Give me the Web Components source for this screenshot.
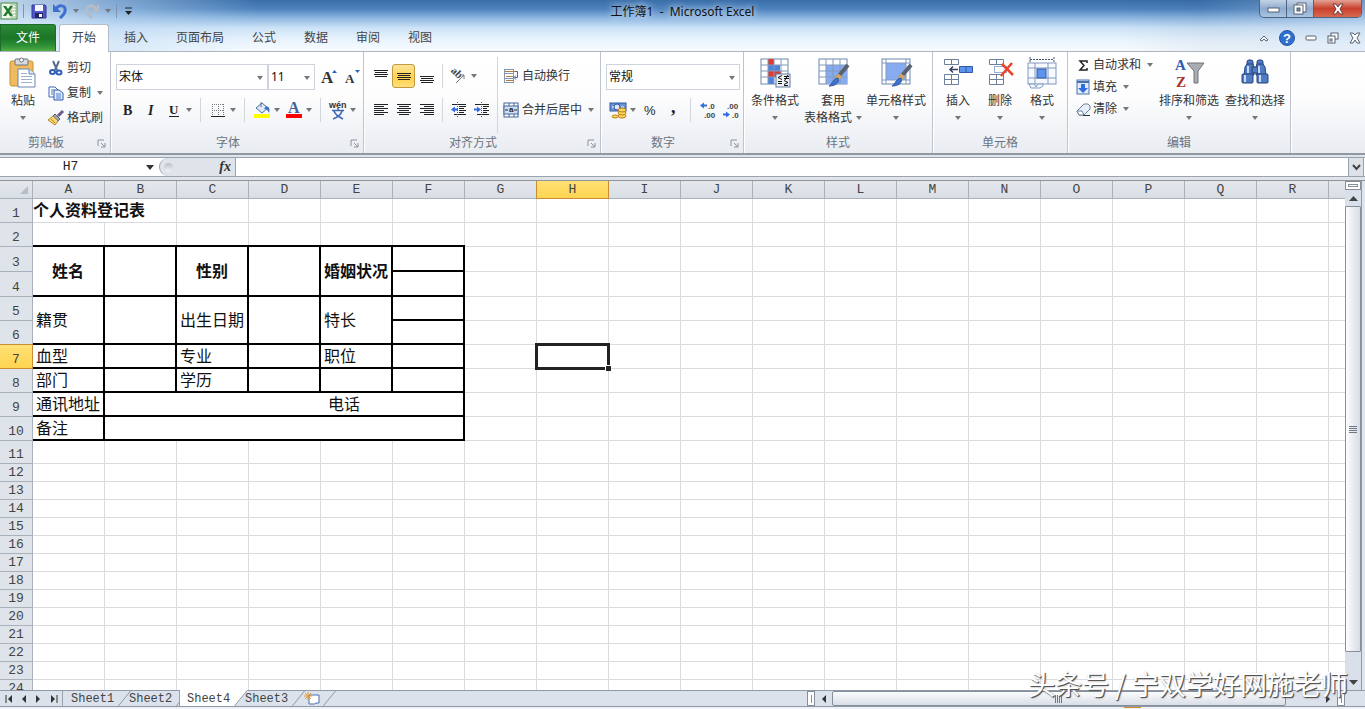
<!DOCTYPE html>
<html lang="zh-CN">
<head>
<meta charset="utf-8">
<title>工作簿1 - Microsoft Excel</title>
<style>
html,body{margin:0;height:100%;overflow:hidden}
body{font-family:"Noto Sans","Noto Sans CJK SC",sans-serif;font-size:12px;line-height:16px;color:#333;background:#dfe5ee}
</style>
</head>
<body>
<xl-app></xl-app>
<script>
const ICONS = {
excel:[18,18,`<rect x="1" y="1" width="16" height="16" fill="#eef7ea" stroke="#3c8a3a"/><rect x="11" y="3" width="5" height="12" fill="#fff" stroke="#8dbb84"/><path d="M11 6h5M11 9h5M11 12h5" stroke="#8dbb84"/><path d="M3 4h3l2 3 2-3h3L9.500 9l3.500 5h-3l-2-3-2 3H3l3.500-5z" fill="#1f7a2c"/>`],
save:[16,16,`<path d="M1 2h13l1 1v12H1z" fill="#5457c2" stroke="#3336a0"/><rect x="4" y="2" width="8" height="6" fill="#f3f6ff"/><rect x="4" y="10" width="8" height="5" fill="#23246e"/><rect x="8" y="11" width="3" height="3" fill="#fff"/>`],
undo:[16,16,`<path d="M4 6C7 1 14 2 13 8c0 3-3 5-5 7" fill="none" stroke="#3f6fd0" stroke-width="3"/><path d="M1 1v8h8z" fill="#3f6fd0"/>`],
redo:[16,16,`<path d="M12 6C9 1 2 2 3 8c0 3 3 5 5 7" fill="none" stroke="#b4bcc8" stroke-width="3"/><path d="M15 1v8H7z" fill="#b4bcc8"/>`],
custom:[9,8,`<path d="M1 1h7" stroke="#222"/><path d="M1 4h7L4.500 8z" fill="#222"/>`],
down:[6,4,`<path d="M0 0h6L3 4z" fill="#777"/>`],
dark:[8,5,`<path d="M0 0h8L4 5z" fill="#333"/>`],
paste:[32,32,`<rect x="3" y="4" width="23" height="25" rx="2" fill="#f0bb5e" stroke="#c98f35"/><rect x="8" y="2" width="13" height="6" rx="1" fill="#d5d9e0" stroke="#6d747e"/><circle cx="14.500" cy="3" r="2" fill="#fff" stroke="#6d747e"/><path d="M11 12h11l6 5v13H11z" fill="#fff" stroke="#6a86ad"/><path d="M22 12v5h6" fill="#dbe6f4" stroke="#6a86ad"/><path d="M14 16.500h6M14 19.500h11M14 22.500h11M14 25.500h11" stroke="#9db1cc"/>`],
cut:[16,16,`<path d="M5 1l4 9M11 1L7 10" stroke="#5b6e8b" stroke-width="2"/><ellipse cx="4.500" cy="12" rx="2.500" ry="2" fill="none" stroke="#2f5fb5" stroke-width="2"/><ellipse cx="11" cy="12.500" rx="2.500" ry="2" fill="none" stroke="#2f5fb5" stroke-width="2"/>`],
copy:[16,16,`<path d="M1 2h6l3 3v7H1z" fill="#fff" stroke="#3f68b4"/><path d="M6 5h5l4 3v7H6z" fill="#e5eefc" stroke="#2c56a8"/><path d="M3 5h3M3 7h2M3 9h2M8 9h5M8 11h5M8 13h5" stroke="#4e7fd0"/>`],
brush:[16,16,`<path d="M15 1l-5 5" stroke="#6d5a86" stroke-width="3"/><path d="M7 4l5 5-2 2-5-5z" fill="#9aa4b4" stroke="#59626f"/><path d="M5 6l5 5-3 4-7-5z" fill="#f5d672" stroke="#b6862c"/><path d="M3 9l4 4" stroke="#b6862c"/>`],
grow:[18,16,`<text x="1" y="14" font-family="Liberation Serif" font-weight="700" font-size="17" fill="#333">A</text><path d="M12 4h5L14.500 1z" fill="#2f63bd"/>`],
shrink:[18,16,`<text x="2" y="14" font-family="Liberation Serif" font-weight="700" font-size="13" fill="#333">A</text><path d="M12 1h5l-2.500 3z" fill="#2f63bd"/>`],
bold:[16,16,`<text x="3" y="13" font-family="Liberation Serif" font-weight="700" font-size="14" fill="#222">B</text>`],
italic:[16,16,`<text x="5" y="13" font-family="Liberation Serif" font-weight="700" font-style="italic" font-size="14" fill="#222">I</text>`],
under:[16,16,`<text x="3" y="12" font-family="Liberation Serif" font-weight="700" font-size="13" fill="#222">U</text><path d="M3 14.500h10" stroke="#222"/>`],
border:[16,16,`<path d="M2.500 2v11M8.500 2v11M13.500 2v11M2 2.500h12M2 8.500h12" stroke="#777" stroke-dasharray="1 1"/><path d="M1 14.500h14" stroke="#222"/>`],
fill:[18,18,`<rect x="1" y="13" width="16" height="4" fill="#ff0"/><path d="M3 7l6-5 6 5-6 5z" fill="#dbe8f8" stroke="#52719f"/><path d="M8 6V1" stroke="#52719f"/><path d="M13 5c4 1 4 4 3 7-1-2-2-4-5-4z" fill="#4374c4"/>`],
color:[18,18,`<text x="3" y="12" font-family="Liberation Serif" font-weight="700" font-size="16" fill="#3d5f9e">A</text><rect x="1" y="13" width="16" height="4" fill="#f00"/>`],
wen:[20,18,`<text x="1" y="7" font-family="Liberation Sans" font-weight="700" font-size="9" fill="#333">wén</text><path d="M4 9.500h12M10 7v2M14 10c-1 4-4 6-9 8M6 10c1 4 5 6 9 8" fill="none" stroke="#3e68b7" stroke-width="1.500"/>`],
top:[16,16,`<path d="M1 2.500h14M2 4.500h12M1 6.500h14M2 8.500h12" stroke="#222"/>`],
middle:[16,16,`<path d="M1 5.500h14M2 7.500h12M1 9.500h14M2 11.500h12" stroke="#222"/>`],
bottom:[16,16,`<path d="M1 8.500h14M2 10.500h12M1 12.500h14M2 14.500h12" stroke="#222"/>`],
left:[16,16,`<path d="M1 2.500h14M1 4.500h10M1 6.500h14M1 8.500h10M1 10.500h14M1 12.500h10" stroke="#222"/>`],
center:[16,16,`<path d="M1 2.500h14M3 4.500h10M1 6.500h14M3 8.500h10M1 10.500h14M3 12.500h10" stroke="#222"/>`],
right:[16,16,`<path d="M1 2.500h14M5 4.500h10M1 6.500h14M5 8.500h10M1 10.500h14M5 12.500h10" stroke="#222"/>`],
orient:[18,16,`<g transform="rotate(45 6 6)"><text x="0" y="8" font-family="Liberation Serif" font-weight="700" font-size="11" fill="#444">ab</text></g><path d="M6 15l8-8M14 11V7h-4" fill="none" stroke="#777"/>`],
outdent:[16,16,`<path d="M1 2.500h14M8 4.500h7M8 6.500h5M8 8.500h7M8 10.500h5M3 12.500h12" stroke="#222"/><path d="M6.500 0v16" stroke="#555" stroke-dasharray="1 1"/><path d="M0 7.500l4-3v2h3v2H4v2z" fill="#2f6de0"/>`],
indent:[16,16,`<path d="M1 2.500h14M9 4.500h6M9 6.500h4M9 8.500h6M9 10.500h4M3 12.500h12" stroke="#222"/><path d="M7.500 0v16" stroke="#555" stroke-dasharray="1 1"/><path d="M7 7.500l-4-3v2H0v2h3v2z" fill="#2f6de0"/>`],
wrap:[16,16,`<rect x="1.500" y="1.500" width="9" height="13" fill="#fff" stroke="#8296b4"/><path d="M1 5.500h10M1 10.500h10" stroke="#8296b4"/><path d="M2 3.500h10M3 8.500h7M3 12.500h7" stroke="#b57a3a"/><path d="M12 3.500h2.500V9.500h-3M13 7.500l-2 2 2 2" fill="none" stroke="#3e68b7"/>`],
merge:[16,16,`<rect x="1" y="1" width="14" height="14" fill="#fff" stroke="#46679b"/><path d="M1 4.500h14M1 11.500h14M6 1v3M11 1v3M6 12v3M11 12v3" stroke="#46679b"/><rect x="1" y="4" width="14" height="8" fill="#cfe0f6" stroke="#46679b"/><text x="6" y="10" font-family="Liberation Sans" font-weight="700" font-size="8" fill="#222">a</text><path d="M2 8h3M11 8h3" stroke="#222"/>`],
money:[18,18,`<rect x="1" y="2" width="16" height="8" fill="#6c93d8" stroke="#2f58a3"/><circle cx="8" cy="6" r="3" fill="#dbe8fb" stroke="#2f58a3"/><path d="M3 6h2M12 6h3" stroke="#fff"/><g fill="#ffd75c" stroke="#b87c15"><ellipse cx="13" cy="15" rx="4" ry="2"/><ellipse cx="13" cy="12" rx="4" ry="2"/><ellipse cx="13" cy="9" rx="4" ry="2"/><ellipse cx="6" cy="15.500" rx="3" ry="1.500"/></g>`],
percent:[16,16,`<text x="2" y="13" font-family="Liberation Sans" font-size="13" fill="#222">%</text>`],
comma:[16,16,`<text x="6" y="11" font-family="Liberation Serif" font-weight="700" font-size="18" fill="#222">,</text>`],
incdec:[18,20,`<text x="9" y="9" font-family="Liberation Sans" font-weight="700" font-size="8" fill="#444">.0</text><text x="5" y="18" font-family="Liberation Sans" font-weight="700" font-size="8" fill="#444">.00</text><path d="M1 5.500l4-3v2h3v2H5v2z" fill="#2f6de0"/>`],
decdec:[18,20,`<text x="5" y="9" font-family="Liberation Sans" font-weight="700" font-size="8" fill="#444">.00</text><text x="10" y="18" font-family="Liberation Sans" font-weight="700" font-size="8" fill="#444">.0</text><path d="M8 14.500l-4-3v2H1v2h3v2z" fill="#2f6de0"/>`],
cond:[32,32,`<rect x="2" y="2" width="27" height="25" fill="#fff" stroke="#6d87ad"/><rect x="9" y="2" width="6" height="6" fill="#e03b30"/><rect x="9" y="8" width="12" height="6" fill="#4f83dc"/><rect x="9" y="14" width="13" height="6" fill="#e03b30"/><rect x="9" y="20" width="6" height="7" fill="#4f83dc"/><path d="M2 8h27M2 14h27M2 20h27M9 2v25M15 2v25M22 2v25" stroke="#8299bd"/><rect x="17" y="17" width="14" height="13" fill="#eef2f8" stroke="#61799f"/><path d="M23 18.500l-4 2 4 2M19 24.500h4M19 26.500h4M25 19.500h5M25 21.500h5M29 18l-3 5M25 23.500l4 2-4 2M25 28.500h4" fill="none" stroke="#111"/>`],
tablefmt:[32,32,`<rect x="2" y="2" width="28" height="25" fill="#fff" stroke="#6d87ad"/><rect x="9" y="8" width="21" height="19" fill="#86abef"/><path d="M2 8h28M2 14h28M2 20h28M9 2v25M16 2v25M23 2v25" stroke="#8299bd"/><path d="M31 8L20 21" stroke="#59616e" stroke-width="4"/><path d="M23 18l-3 4" stroke="#d3a45b" stroke-width="5"/><path d="M21 21c2 5-3 8-9 8 4-2 3-7 9-8z" fill="#3f73cf" stroke="#2d57a5"/>`],
cellstyle:[32,32,`<rect x="2" y="2" width="28" height="25" fill="#fff" stroke="#6d87ad"/><rect x="6" y="6" width="20" height="17" fill="#86abef"/><path d="M2 6h28M2 23h28M6 2v25M26 2v25" stroke="#8299bd"/><path d="M31 8L20 21" stroke="#59616e" stroke-width="4"/><path d="M23 18l-3 4" stroke="#d3a45b" stroke-width="5"/><path d="M21 21c2 5-3 8-9 8 4-2 3-7 9-8z" fill="#3f73cf" stroke="#2d57a5"/>`],
insert:[32,32,`<g fill="#fff" stroke="#6c7f9c"><path d="M2.500 2.500h14v5h-14zM9.500 2.500v5M2.500 17.500h14v10h-14zM9.500 17.500v10M2.500 22.500h14"/></g><path d="M17.500 9.500h13v6h-13zM24 9.500v6" fill="#5b93ee" stroke="#2f5aa8"/><path d="M8 12.500h8M11 9.500l-3 3 3 3" fill="none" stroke="#33435e" stroke-width="1.500"/>`],
remove:[32,32,`<g fill="#fff" stroke="#6c7f9c"><path d="M5.500 2.500h14v5h-14zM12.500 2.500v5M5.500 17.500h14v10h-14zM12.500 17.500v10M5.500 22.500h14"/></g><path d="M10.500 9.500h12v6h-12z" fill="none" stroke="#2f5aa8" stroke-dasharray="1 1"/><path d="M18 7l11 11M28 6L17 19" stroke="#ea4528" stroke-width="2.500"/>`],
format:[32,32,`<path d="M4 2.500h24M4 0v5M28 0v5" stroke="#44536c" stroke-dasharray="2 1"/><rect x="2" y="6" width="28" height="21" fill="#f6f9fe" stroke="#8299bd"/><path d="M2 11h28M2 21h28M9 6v21M22 6v21" stroke="#8299bd"/><rect x="11" y="12" width="9" height="9" fill="#5b93ee" stroke="#2f5aa8"/><path d="M3 27h5l2 3 2-3h5v2l-3 2H5z" fill="#f6f9fe" stroke="#8299bd"/>`],
sum:[14,16,`<path d="M11 6V4H4l4 4.500L4 13h7v-2" fill="none" stroke="#222" stroke-width="1.500"/>`],
filldown:[14,16,`<rect x="1" y="1" width="12" height="14" fill="#e1ecfb" stroke="#4a70ae"/><path d="M1 3h12" stroke="#4a70ae" stroke-width="2"/><path d="M5 5h4v4h3l-5 5-5-5h3z" fill="#2f6de0"/>`],
erase:[14,16,`<path d="M1 10l7-7h4l2 2v3l-6 6H3z" fill="#e9eff8" stroke="#6c7f9c"/><path d="M1 10l2 4h5L6 10z" fill="#fff" stroke="#6c7f9c"/><path d="M7 14.500h7" stroke="#333"/>`],
sort:[32,32,`<path d="M14 6h17l-6 8v12h-4V14z" fill="#a9adb2" stroke="#6f747a"/><text x="2" y="13" font-family="Liberation Serif" font-weight="700" font-size="15" fill="#2c5bb5">A</text><text x="3" y="30" font-family="Liberation Serif" font-weight="700" font-size="15" fill="#a8302a">Z</text>`],
find:[32,32,`<g fill="#4f7cc5" stroke="#26427c"><rect x="8" y="3" width="6" height="6" rx="2"/><rect x="18" y="3" width="6" height="6" rx="2"/><path d="M6 10l2-3h6l1 3v8H5zM17 10l1-3h6l2 3 1 8H17z"/><rect x="13" y="10" width="6" height="6"/><rect x="3" y="17" width="11" height="9" rx="1"/><rect x="18" y="17" width="11" height="9" rx="1"/></g><path d="M6 18v7M21 18v7M9 9v7M20 9v7" stroke="#c8daf6" stroke-width="2"/>`],
launch:[9,9,`<path d="M1 7V1h6M4 4l4 4M8 4v4H4" fill="none" stroke="#8b929c"/>`],
wmin:[14,8,`<rect x="2" y="3" width="11" height="4" fill="#fff" stroke="#566173"/>`],
wmax:[14,14,`<path d="M4 1h9v9h-9z" fill="#fff" stroke="#566173"/><rect x="1" y="3" width="9" height="9" fill="#fff" stroke="#566173"/><rect x="4" y="6" width="3" height="3" fill="#6b86ab" stroke="#566173"/>`],
wclose:[14,12,`<path d="M2 1h3l2 3 2-3h3L9 6l3 5H9L7 8l-2 3H2l3-5z" fill="#fff" stroke="#6b3a3a"/>`],
chev:[10,8,`<path d="M1 6l4-4 4 4-2 1-2-2-2 2z" fill="#fff" stroke="#59636f"/>`],
help:[16,16,`<circle cx="8" cy="8" r="7.500" fill="#2f6fd0" stroke="#2357a8"/><text x="4" y="13" font-family="Liberation Sans" font-weight="700" font-size="13" fill="#fff">?</text>`],
mmin:[12,6,`<rect x="1" y="1" width="10" height="4" rx="1" fill="#fff" stroke="#59636f"/>`],
mmax:[12,12,`<rect x="4" y="1" width="7" height="6" fill="#fff" stroke="#59636f"/><rect x="1" y="4" width="7" height="7" fill="#fff" stroke="#59636f"/><rect x="3" y="7" width="2" height="2" fill="#fff" stroke="#59636f"/>`],
mclose:[12,12,`<path d="M1 1h3l2 2 2-2h3L8 6l3 5H8L6 8l-2 3H1l3-5z" fill="#fff" stroke="#59636f"/>`],
first:[8,8,`<path d="M1 0v8" stroke="#333"/><path d="M7 0v8L3 4z" fill="#333"/>`],
prev:[5,8,`<path d="M5 0v8L1 4z" fill="#333"/>`],
next:[5,8,`<path d="M0 0v8l4-4z" fill="#333"/>`],
last:[8,8,`<path d="M7 0v8" stroke="#333"/><path d="M1 0v8l4-4z" fill="#333"/>`],
up:[9,5,`<path d="M0 5h9L4.500 0z" fill="#444"/>`],
newsheet:[16,14,`<path d="M5 3h10v8h-3l-1 1H5z" fill="#fff" stroke="#4a70ae"/><path d="M4 0v8M0 4h8M1 1l6 6M7 1L1 7" stroke="#e59a2c"/>`],
slash:[14,16,`<path d="M0 0h14L1 16H0z" class="face"/><path d="M13.500 0L.5 16" stroke="#8f99a8"/>`]
};
const icon = n => { const [w,h,b] = ICONS[n]; return `<svg width="${w}" height="${h}" viewBox="0 0 ${w} ${h}" fill="none" aria-hidden="true">${b}</svg>`; };
const BASE = `*{box-sizing:border-box}svg{display:block;flex:none;overflow:visible}button,input,select{font:inherit;color:inherit;border:0;background:none;padding:0;margin:0;border-radius:0;appearance:none;outline:0}`;
const define = (tag, render) => customElements.define(tag, class extends HTMLElement{
  connectedCallback(){
    if(this.shadowRoot) return;
    const t = document.createElement('template');
    t.innerHTML = render(this);
    this.attachShadow({mode:'open'}).append(t.content.cloneNode(true));
  }
});

define('xl-tool', e => `<style>${BASE}
:host{display:block;flex:none}
button{display:flex;align-items:center;height:24px;width:23px;border:1px solid transparent;border-radius:3px}
.i{display:flex;justify-content:center;flex:1}
:host([arrow]) button{width:32px;padding-right:2px}
:host([arrow]) .i{flex:0 0 20px;margin:0 2px 0 1px}
:host([on]) button{background:linear-gradient(#fbe49a,#ffd04c 60%,#ffe17c);border-color:#c29a3d}
</style><button aria-label="${e.getAttribute('label')}"><span class="i">${icon(e.getAttribute('icon'))}</span>${e.hasAttribute('arrow')?icon('down'):''}</button>`);

define('xl-small', e => `<style>${BASE}
:host{display:block;flex:none}
button{display:flex;align-items:center;height:22px;gap:3px;white-space:nowrap}
.a{margin-left:3px}
</style><button>${icon(e.getAttribute('icon'))}<span><slot></slot></span>${e.hasAttribute('arrow')?`<span class="a">${icon('down')}</span>`:''}</button>`);

define('xl-big', e => `<style>${BASE}
:host{display:block;flex:none;width:42px}
button{display:flex;flex-direction:column;align-items:center;width:100%;white-space:nowrap}
.t{margin-top:4px}
.a{padding-top:7px}
.l{display:flex;align-items:center;gap:4px;margin-top:1px}
</style><button>${icon(e.getAttribute('icon'))}<span class="t"><slot></slot></span>${e.hasAttribute('second')?`<span class="l">${e.getAttribute('second')}${icon('down')}</span>`:`<span class="a">${icon('down')}</span>`}</button>`);

define('xl-sep', () => `<style>:host{flex:none;width:12px;display:flex;justify-content:center;align-self:stretch}i{width:1px;background:#d3d7dd}</style><i></i>`);

define('xl-combo', e => `<style>${BASE}
:host{display:block;position:relative;height:26px;border:1px solid #cfd4dc;background:#fff}
select{width:100%;height:24px;padding-left:2px;color:#111}
svg{position:absolute;right:4px;top:11px;pointer-events:none}
</style><select aria-label="${e.getAttribute('label')}"><option>${e.getAttribute('value')}</option></select>${icon('down')}`);

define('xl-group', e => `<style>${BASE}
:host{display:flex;flex-direction:column;flex:none;border-right:1px solid #bfc4cc;box-shadow:1px 0 #fff}
.b{flex:1;display:flex;padding:5px 0 0 var(--inset,5px)}
.f{display:flex;align-items:center;height:20px;color:#6b7480}
.f span{flex:1;text-align:center}
.f button{margin:0 4px 0 5px;flex:none}
</style><div class="b"><slot></slot></div><div class="f"><span>${e.getAttribute('label')}</span>${e.hasAttribute('launcher')?`<button aria-label="${e.getAttribute('label')}设置">${icon('launch')}</button>`:''}</div>`);

define('xl-titlebar', () => `<style>${BASE}
:host{display:grid;grid-template-columns:1fr auto 1fr;height:24px}
.q{display:flex;align-items:center;height:22px;gap:5px}
.q button{display:flex;align-items:center}
.q i{width:1px;height:14px;background:#7f95b3;margin:0 2px 0 0}
h1{font:12px/24px "Noto Sans","Noto Sans CJK SC",sans-serif;margin:0;color:#111;white-space:pre;text-shadow:0 0 6px #cfe3f8,0 0 8px #cfe3f8}
.w{justify-self:end;display:flex;height:18px;margin-right:3px;border:1px solid #4f6480;border-top:0;border-radius:0 0 5px 5px;overflow:hidden;background:linear-gradient(#c3d3e7,#8fabce 50%,#a9c5e3)}
.w button{display:flex;align-items:center;justify-content:center;width:27px;border-right:1px solid #4f6480}
.w .x{width:47px;border:0;background:linear-gradient(#e3a294,#c9402c 50%,#d9694f)}
</style>
<div class="q">${icon('excel')}<i></i><button aria-label="保存">${icon('save')}</button><button aria-label="撤消">${icon('undo')}</button>${icon('down')}<button aria-label="恢复">${icon('redo')}</button>${icon('down')}<i></i><button aria-label="自定义">${icon('custom')}</button></div>
<h1>工作簿1  -  Microsoft Excel</h1>
<div class="w"><button aria-label="最小化">${icon('wmin')}</button><button aria-label="还原">${icon('wmax')}</button><button class="x" aria-label="关闭">${icon('wclose')}</button></div>`);

define('xl-tabs', () => `<style>${BASE}
:host{display:flex;height:28px;align-items:flex-end;border-bottom:1px solid #adb5bf}
nav{display:flex;flex:1}
nav button{height:27px;padding:0 14px;color:#444}
nav .f{width:56px;margin-right:3px;color:#fff;border-radius:0 3px 0 0;background:linear-gradient(#2c8a36,#1b7427 50%,#2f9136 80%,#52ad45);border:1px solid #1d6b28;border-bottom:0}
nav .on{width:50px;height:28px;margin:0 1px -1px 0;padding:0 10px 1px;background:#fff;border:1px solid #b3bcc8;border-bottom:0;border-radius:3px 3px 0 0}
.r{display:flex;align-items:center;gap:10px;height:27px;padding-right:4px}
.r button{display:flex}
</style>
<nav><button class="f">文件</button><button class="on">开始</button>${['插入','页面布局','公式','数据','审阅','视图'].map(t=>`<button>${t}</button>`).join('')}</nav>
<div class="r">${[['chev','收起功能区'],['help','帮助'],['mmin','最小化窗口'],['mmax','还原窗口'],['mclose','关闭窗口']].map(([i,l])=>`<button aria-label="${l}">${icon(i)}</button>`).join('')}</div>`);

define('xl-ribbon', () => `<style>${BASE}
:host{display:flex;height:103px;background:linear-gradient(#fff,#fdfdfe 45%,#f3f5f8 70%,#e9ecf1);border-bottom:2px solid #9298a1;overflow:hidden}
.row{display:flex;align-items:center;height:24px}
.rows{display:flex;flex-direction:column;gap:10px;padding-top:7px}
.top{height:26px;margin-bottom:-2px}
.col{display:flex;flex-direction:column}
.clip{width:111px;--inset:2px}.font{width:253px}.align{width:237px}.num{width:143px}.style{width:189px;--inset:3px}.cell{width:135px;--inset:4px}.edit{width:223px;--inset:8px}
</style>
<xl-group class="clip" label="剪贴板" launcher><xl-big icon="paste">粘贴</xl-big>
 <div class="col" style="gap:3px;padding-left:4px"><xl-small icon="cut">剪切</xl-small><xl-small icon="copy" arrow>复制</xl-small><xl-small icon="brush">格式刷</xl-small></div></xl-group>
<xl-group class="font" label="字体" launcher><div class="rows">
 <div class="row top"><xl-combo label="字体" value="宋体" style="width:152px"></xl-combo><xl-combo label="字号" value="11" style="width:47px;margin-right:2px"></xl-combo><xl-tool icon="grow" label="增大字号"></xl-tool><xl-tool icon="shrink" label="减小字号"></xl-tool></div>
 <div class="row"><xl-tool icon="bold" label="加粗"></xl-tool><xl-tool icon="italic" label="倾斜"></xl-tool><xl-tool icon="under" label="下划线" arrow></xl-tool><xl-sep></xl-sep><xl-tool icon="border" label="边框" arrow></xl-tool><xl-sep></xl-sep><xl-tool icon="fill" label="填充颜色" arrow></xl-tool><xl-tool icon="color" label="字体颜色" arrow></xl-tool><xl-sep></xl-sep><xl-tool icon="wen" label="拼音指南" arrow></xl-tool></div></div></xl-group>
<xl-group class="align" label="对齐方式" launcher><div class="rows" style="width:122px">
 <div class="row"><xl-tool icon="top" label="顶端对齐"></xl-tool><xl-tool icon="middle" label="垂直居中" on></xl-tool><xl-tool icon="bottom" label="底端对齐"></xl-tool><xl-sep style="width:9px"></xl-sep><xl-tool icon="orient" label="方向" arrow></xl-tool></div>
 <div class="row"><xl-tool icon="left" label="左对齐"></xl-tool><xl-tool icon="center" label="居中"></xl-tool><xl-tool icon="right" label="右对齐"></xl-tool><xl-sep style="width:9px"></xl-sep><xl-tool icon="outdent" label="减少缩进"></xl-tool><xl-tool icon="indent" label="增加缩进"></xl-tool></div></div>
 <xl-sep></xl-sep>
 <div class="rows"><div class="row"><xl-small icon="wrap">自动换行</xl-small></div><div class="row"><xl-small icon="merge" arrow>合并后居中</xl-small></div></div></xl-group>
<xl-group class="num" label="数字" launcher><div class="rows">
 <div class="row top"><xl-combo label="数字格式" value="常规" style="width:134px"></xl-combo></div>
 <div class="row"><xl-tool icon="money" label="会计数字格式" arrow></xl-tool><xl-tool icon="percent" label="百分比样式"></xl-tool><xl-tool icon="comma" label="千位分隔样式"></xl-tool><xl-sep></xl-sep><xl-tool icon="incdec" label="增加小数位数"></xl-tool><xl-tool icon="decdec" label="减少小数位数"></xl-tool></div></div></xl-group>
<xl-group class="style" label="样式"><xl-big icon="cond" style="width:56px">条件格式</xl-big><xl-big icon="tablefmt" second="表格格式" style="width:60px">套用</xl-big><xl-big icon="cellstyle" style="width:66px">单元格样式</xl-big></xl-group>
<xl-group class="cell" label="单元格"><xl-big icon="insert">插入</xl-big><xl-big icon="remove">删除</xl-big><xl-big icon="format">格式</xl-big></xl-group>
<xl-group class="edit" label="编辑"><div class="col" style="width:80px;margin-top:-3px"><xl-small icon="sum" arrow>自动求和</xl-small><xl-small icon="filldown" arrow>填充</xl-small><xl-small icon="erase" arrow>清除</xl-small></div><xl-big icon="sort" style="width:66px">排序和筛选</xl-big><xl-big icon="find" style="width:66px">查找和选择</xl-big></xl-group>`);

define('xl-formula', () => `<style>${BASE}
:host{display:block;padding:2px 0 3px;background:#dfe4ea;border-bottom:1px solid #8f949c}
.r{display:flex;height:20px;background:#fff;border:1px solid #9aa2ad;border-width:1px 0}
.n{display:flex;align-items:center;width:159px}
.n input{flex:1;min-width:0;text-align:center;font:13px/16px "Liberation Mono",monospace;color:#222}
.n button{padding:0 5px}
.p{display:flex;align-items:center;width:77px;padding:0 4px;background:#dfe4ea;border:1px solid #9aa2ad;border-width:0 1px 0 1px;border-radius:9px 0 0 9px}
.p i{width:9px;height:9px;border-radius:50%;background:linear-gradient(#b9bfc8,#f3f5f7)}
.p button{margin-left:auto;font:italic 700 14px/16px "Liberation Serif",serif;color:#333}
.e{flex:1;min-width:0;padding:0 4px}
.x{width:16px;margin-right:1px;display:flex;align-items:center;justify-content:center;background:#dde2e9;border:1px solid #9aa2ad;border-width:0 1px}
</style><div class="r"><div class="n"><input aria-label="名称框" value="H7"><button aria-label="名称列表">${icon('dark')}</button></div><div class="p"><i></i><button>fx</button></div><input class="e" aria-label="编辑栏"><button class="x" aria-label="展开编辑栏"><svg width="9" height="7" fill="none"><path d="M1 1l3.500 4L8 1" stroke="#444" stroke-width="2"/></svg></button></div>`);

const HEIGHTS = [24,24,25,25,24,24,24,24,24,24,23];
/* text, column span, row span, classes: k = black bottom edge, r = black right edge */
const B = 'k r';
const FORM = {
 1:[['个人资料登记表',2,1,'title'],['',1],['',1],['',1],['',1]],
 2:Array.from({length:6},()=>['',1,1,'k']),
 3:[['姓名',1,2,B+' h'],['',1,2,B],['性别',1,2,B+' h'],['',1,2,B],['婚姻状况',1,2,B+' h'],['',1,1,B]],
 4:[['',1,1,B]],
 5:[['籍贯',1,2,B],['',1,2,B],['出生日期',1,2,B],['',1,2,B],['特长',1,2,B],['',1,1,B]],
 6:[['',1,1,B]],
 7:[['血型',1,1,B],['',1,1,B],['专业',1,1,B],['',1,1,B],['职位',1,1,B],['',1,1,B]],
 8:[['部门',1,1,B],['',1,1,B],['学历',1,1,B],['',1,1,B],['',1,1,B],['',1,1,B]],
 9:[['通讯地址',1,1,B],['',3,1,'k n'],['电话',2,1,B+' tel']],
 10:[['备注',1,1,B],['',5,1,B]]
};
define('xl-grid', () => {
  const cols = 'ABCDEFGHIJKLMNOPQRS'.split('');
  let rows = '';
  for(let r=1;r<=24;r++){
    const form = FORM[r] || Array.from({length:6},()=>['',1]);
    rows += `<tr style="height:${HEIGHTS[r-1]||18}px"><th scope="row"${r===7?' class="sel"':''}>${r}</th>`
      + form.map(([t,c,s=1,k=''])=>`<td colspan="${c}" rowspan="${s}" class="${k}">${t}</td>`).join('')
      + cols.slice(6).map(c=>`<td>${r===7&&c==='H'?'<div class="cursor"><i></i></div>':''}</td>`).join('') + '</tr>';
  }
  return `<style>${BASE}
:host{display:block;flex:1;min-width:0;overflow:hidden;background:#fff}
table{table-layout:fixed;width:1401px;border-collapse:separate;border-spacing:0}
th,td{padding:0;border:0}
th{font:13px/16px "Liberation Mono",monospace;color:#444;background:#dfe4ea;border:0 solid #aab1bb;border-width:0 1px 1px 0}
thead tr{height:18px}
thead th{background:linear-gradient(#e4e8ed,#d9dee5)}
tbody th{vertical-align:bottom}
th.sel{background:linear-gradient(#ffe175,#ffd451);border-color:#c98e35}
thead th.sel{box-shadow:-1px 0 #c98e35}
tbody th.sel{box-shadow:0 -1px #c98e35}
td{--r:inset -1px 0 #d9dbde;--b:inset 0 -1px #d9dbde;box-shadow:var(--b),var(--r);font-size:16px;line-height:20px;color:#111;padding:0 0 2px 3px;white-space:nowrap;vertical-align:middle}
td.k{--b:inset 0 -2px #000}
td.r{--r:inset -2px 0 #000}
td.n{--r:inset 0 0 #000}
td.h{font-weight:700;text-align:center;padding:0 2px 2px 0}
td.title{font-weight:700;padding-left:0}
td.tel{padding-left:7px}
td:has(.cursor){position:relative}
.cursor{position:absolute;inset:-2px -1px -1px -2px;border:3px solid #222}
.cursor i{position:absolute;right:-4px;bottom:-4px;width:6px;height:6px;background:#222;border:1px solid #fff;border-width:1px 0 0 1px}
.corner svg{margin:0 3px 0 auto}
</style><table><colgroup><col style="width:33px">${cols.map(()=>'<col style="width:72px">').join('')}</colgroup>
<thead><tr><th class="corner"><svg width="10" height="10"><path d="M9 1v8H1z" fill="#b8bec7"/></svg></th>${cols.map(c=>`<th scope="col"${c==='H'?' class="sel"':''}>${c==='S'?'':c}</th>`).join('')}</tr></thead><tbody>${rows}</tbody></table>`;
});

define('xl-vscroll', () => `<style>${BASE}
:host{display:flex;flex-direction:column;flex:none;width:17px;background:#dae0e9;border-right:1px solid #8f99a8}
button{display:flex;align-items:center;justify-content:center;flex:none;height:16px}
.s{height:9px;border:1px solid #858e9b;background:#fff}
.s i{width:10px;height:3px;border:1px solid #858e9b}
.t{flex:1;display:flex;flex-direction:column}
.h{flex:446;display:flex;flex-direction:column;align-items:center;justify-content:center;gap:1px;background:linear-gradient(90deg,#fdfdfe,#d7dce5);border:1px solid #858e9b;border-radius:1px}
.h i{width:8px;height:1px;background:#6f7783}
.g{flex:22}
</style><button class="s" aria-label="拆分"><i></i></button><button aria-label="向上">${icon('up')}</button><div class="t"><div class="h"><i></i><i></i><i></i><i></i></div><div class="g"></div></div><button aria-label="向下"><svg width="9" height="5"><path d="M0 0h9L4.500 5z" fill="#444"/></svg></button>`);

define('xl-sheets', () => `<style>${BASE}
:host{display:flex;height:17px;background:#dbe2ec;border:1px solid #8f99a8;border-width:1px 0;flex:none}
button{display:flex;align-items:center;justify-content:center}
.v{display:flex;width:63px;padding-left:1px;border-right:1px solid #9aa2ad}
.v button{width:15px}
.tabs{display:flex;flex:1}
.tabs button{position:relative;width:58px;height:15px;padding-left:8px;justify-content:flex-start;font:12px/16px "Liberation Mono",monospace;color:#444}
.tabs svg{position:absolute;left:54px;top:0}
.face{fill:none}
.tabs .on{z-index:1;height:16px;margin-top:-1px;padding:1px 0 0 7px;background:linear-gradient(90deg,#fff 54px,transparent 54px);border-left:1px solid #9aa2ad}
.on .face{fill:#fff}
.tabs .new{width:44px;padding-left:9px}
.tabs .new svg:first-child{position:static}
.tabs .new svg+svg{left:27px}
.hs{display:flex;width:538px;margin-right:20px}
.hs button{width:17px;flex:none}
.hs .sp{width:8px;border:1px solid #858e9b;background:#fff}
.sp i{width:1px;height:8px;background:#858e9b}
.t{flex:1;display:flex}
.h{flex:461;display:flex;align-items:center;justify-content:center;gap:1px;background:linear-gradient(#fbfcfd,#d9dee7);border:1px solid #858e9b;border-radius:2px}
.h i{width:1px;height:8px;background:#6f7783}
.g{flex:35}
</style>
<div class="v">${[['first','第一张'],['prev','上一张'],['next','下一张'],['last','最后一张']].map(([i,l])=>`<button aria-label="${l}">${icon(i)}</button>`).join('')}</div>
<div class="tabs">${['Sheet1','Sheet2','Sheet4','Sheet3'].map(s=>`<button${s==='Sheet4'?' class="on"':''}>${s}${icon('slash')}</button>`).join('')}<button class="new" aria-label="插入工作表">${icon('newsheet')}${icon('slash')}</button></div>
<div class="hs"><button class="sp" aria-label="拆分标签"><i></i></button><button aria-label="向左">${icon('prev')}</button><div class="t"><div class="h"><i></i><i></i><i></i><i></i></div><div class="g"></div></div><button aria-label="向右">${icon('next')}</button><button class="sp" aria-label="拆分"><i></i></button></div>`);

define('xl-app', () => `<style>${BASE}
:host{display:flex;flex-direction:column;height:100vh;position:relative;overflow:hidden}
header{flex:none;background:linear-gradient(90deg,rgba(225,238,250,.8),rgba(190,217,243,.5) 120px,transparent 260px,transparent 82%,rgba(20,50,90,.05) 88%,rgba(200,220,240,.4)),linear-gradient(#3a6ea9,#4d82bd 9px,#8db6e0 18px,#cde3f7 28px,#eaf4fd 40px,#f7fbff 51px)}
.work{display:flex;flex:1;min-height:0;padding-right:3px}
.status{flex:none;height:2px;background:#eef1f6}
.status i{display:block;width:17px;height:1px;margin:0 224px 0 auto;background:#d98b23}
.mark{position:absolute;right:17px;bottom:7px;font:400 27px/36px "Noto Sans CJK SC",sans-serif;color:#fff;text-shadow:1px 1px 0 #555,1px 1px 2px #777;white-space:pre;pointer-events:none}
</style><header><xl-titlebar></xl-titlebar><xl-tabs></xl-tabs></header><xl-ribbon></xl-ribbon><xl-formula></xl-formula><div class="work"><xl-grid></xl-grid><xl-vscroll></xl-vscroll></div><xl-sheets></xl-sheets><div class="status"><i></i></div><div class="mark">头条号 / 宁双学好网施老师</div>`);
</script>
</body>
</html>
